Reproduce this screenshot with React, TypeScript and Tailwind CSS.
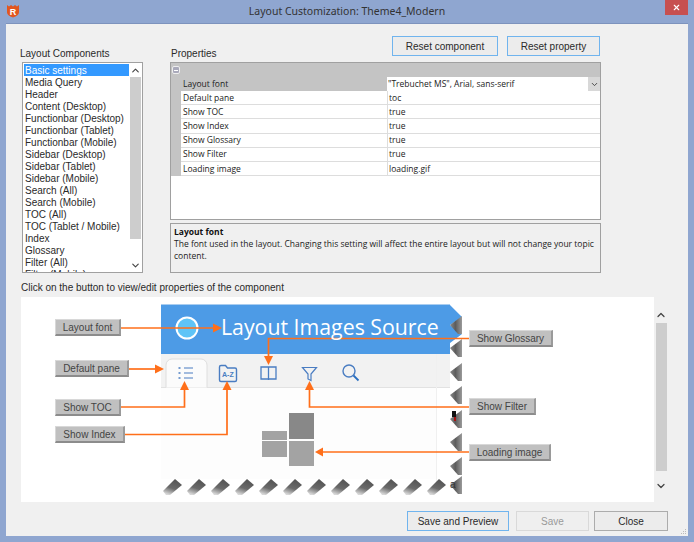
import { ChevronDown, ChevronUp, X } from "lucide-react";

const components = [
  "Media Query",
  "Header",
  "Content (Desktop)",
  "Functionbar (Desktop)",
  "Functionbar (Tablet)",
  "Functionbar (Mobile)",
  "Sidebar (Desktop)",
  "Sidebar (Tablet)",
  "Sidebar (Mobile)",
  "Search (All)",
  "Search (Mobile)",
  "TOC (All)",
  "TOC (Tablet / Mobile)",
  "Index",
  "Glossary",
  "Filter (All)",
  "Filter (Mobile)",
];

const rows = [
  ["Default pane", "toc"],
  ["Show TOC", "true"],
  ["Show Index", "true"],
  ["Show Glossary", "true"],
  ["Show Filter", "true"],
  ["Loading image", "loading.gif"],
];

const labels = [
  { text: "Layout font", className: "left-[34px] top-[22px] w-[66px]" },
  { text: "Default pane", className: "left-[34px] top-[63px] w-[74px]" },
  { text: "Show TOC", className: "left-[34px] top-[102px] w-[66px]" },
  { text: "Show Index", className: "left-[34px] top-[129px] w-[70px]" },
  { text: "Show Glossary", className: "left-[448px] top-[33px] w-[84px]" },
  { text: "Show Filter", className: "left-[448px] top-[101px] w-[67px]" },
  { text: "Loading image", className: "left-[448px] top-[147px] w-[82px]" },
];

const rightTeeth = [316, 339, 363, 386, 410, 433, 457, 476];
const bottomTeeth = [163, 187, 211, 235, 259, 283, 307, 331, 355, 379, 403, 427];

function Diagram() {
  return (
    <svg viewBox="21 297 633 205" className="absolute inset-0 h-full w-full">
      <defs>
        <linearGradient id="toothB" x1="0.7" y1="0.1" x2="0.35" y2="1">
          <stop offset="0" stopColor="#555" />
          <stop offset="0.55" stopColor="#6a6a6a" />
          <stop offset="1" stopColor="#d8d8d8" />
        </linearGradient>
        <linearGradient id="toothR" x1="0" y1="0" x2="1" y2="0">
          <stop offset="0" stopColor="#8a8a8a" />
          <stop offset="0.45" stopColor="#5c5c5c" />
          <stop offset="1" stopColor="#9a9a9a" />
        </linearGradient>
      </defs>

      {/* page preview */}
      <rect x="161" y="387" width="275" height="92" fill="#fdfdfd" />
      <rect x="161" y="354" width="289" height="33" fill="#f2f2f2" />
      <line x1="161" y1="387.500" x2="450" y2="387.500" stroke="#e2e2e2" />
      <line x1="436.500" y1="354" x2="436.500" y2="490" stroke="#f0f0f0" />
      <path d="M166 387.500V365a6 6 0 0 1 6-6h29a6 6 0 0 1 6 6v22.500" fill="#fbfbfb" stroke="#dedede" />
      <polygon points="161,304 449,304 462,317 450,325 462,334 450,343 450,354 161,354" fill="#4d9be6" />
      <line x1="161" y1="304.500" x2="449" y2="304.500" stroke="#a9cdf0" />
      <circle cx="187" cy="328" r="10.500" fill="#5fc4f7" stroke="#fff" strokeWidth="2" />

      {/* toolbar icons */}
      <g fill="none" stroke="#4a7dc2" strokeWidth="1.200">
        <path d="M184 368h9M184 373h9M184 378h9" />
        <path d="M178.500 368h2M178.500 373h2M178.500 378h2" strokeWidth="1.600" />
        <path d="M219.500 380v-13a1.500 1.500 0 0 1 1.500-1.500h4.500l2 2.500h7.500a1.500 1.500 0 0 1 1.500 1.500v10.500a1.500 1.500 0 0 1-1.500 1.500h-14a1.500 1.500 0 0 1-1.500-1.500z" strokeWidth="1.400" />
        <path d="M261 367h15v12h-15zM268.500 367v13" strokeWidth="1.300" />
        <path d="M302.500 367.500h14l-5.500 6.500v6.500l-3-1.500v-5z" />
        <circle cx="349" cy="371" r="6" strokeWidth="1.400" />
        <path d="M353.500 375.500l5 5" strokeWidth="1.800" stroke="#2a6fc0" />
      </g>
      <text x="222" y="377" fontSize="7" fontWeight="700" fill="#4a7dc2" fontFamily="Liberation Sans, sans-serif">
        A-Z
      </text>

      {/* loading image */}
      <rect x="262" y="431" width="25" height="9" fill="#a3a3a3" />
      <rect x="262" y="441" width="25" height="16" fill="#a3a3a3" />
      <rect x="289" y="413" width="25" height="26" fill="#888" />
      <rect x="289" y="441" width="25" height="25" fill="#a3a3a3" />

      {/* torn edge */}
      {bottomTeeth.map((x) => (
        <polygon
          key={x}
          points={`${x + 12},479 ${x},491 ${x + 3},495 ${x + 7},495 ${x + 19},485`}
          fill="url(#toothB)"
        />
      ))}
      {rightTeeth.map((y) => (
        <polygon key={y} points={`462,${y} 450,${y + 9} 458,${y + 18} 462,${y + 18}`} fill="url(#toothR)" />
      ))}
      <rect x="452" y="411" width="4" height="6" fill="#111" />
      <rect x="454" y="417" width="2" height="4" fill="#a11" />
      <text x="450" y="488" fontSize="10" fill="#333" fontFamily="Liberation Sans, sans-serif">
        a
      </text>

      {/* arrows */}
      <g fill="none" stroke="#ff6f1a" strokeWidth="1.700">
        <path d="M120 328H214" />
        <path d="M128 369H157" />
        <path d="M120 407H184.500V388" />
        <path d="M124 434.500H227V388" />
        <path d="M469 338.500H268.500V358" />
        <path d="M469 407H309.500V388" />
        <path d="M469 452H321" />
      </g>
      <g fill="#ff6f1a">
        <polygon points="222,328 213,323.500 213,332.500" />
        <polygon points="164,369 155,364.500 155,373.500" />
        <polygon points="184.500,381 180,390 189,390" />
        <polygon points="227,381 222.500,390 231.500,390" />
        <polygon points="268.500,365 264,356 273,356" />
        <polygon points="309.500,381 305,390 314,390" />
        <polygon points="315,452 323,447.500 323,456.500" />
      </g>
    </svg>
  );
}

export default function App() {
  return (
    <div className="flex h-[542px] w-[694px] flex-col overflow-hidden bg-[#8fa6d0] font-['Liberation_Sans',sans-serif] text-[10px] text-[#2a2a2a]">
      {/* title bar */}
      <div className="relative flex h-[23px] shrink-0 items-center justify-center font-['Noto_Sans',sans-serif] text-[10.5px] text-[#333]">
        <svg viewBox="0 0 14 14" className="absolute left-[6px] top-[4px] h-[14px] w-[14px]">
          <path d="M1 1l2 1.500L5 1l2 1.500L9 1l2 1.500L13 1v7c0 3-3 4.500-6 5.500C4 12.500 1 11 1 8z" fill="#e2561f" />
          <text x="7" y="10.500" textAnchor="middle" fontSize="9" fontWeight="700" fill="#fff" fontFamily="Liberation Sans, sans-serif">
            R
          </text>
        </svg>
        <span>Layout Customization: Theme4_Modern</span>
        <div className="absolute right-[6px] top-0 flex h-[15px] w-[23px] items-center justify-center bg-[#c75050]">
          <X size={9} strokeWidth={3} color="#fff" />
        </div>
      </div>

      {/* client area */}
      <div className="relative mx-[6px] mb-[6px] flex flex-1 flex-col border-t border-[#7d93bd] bg-[#f0f0f0] pl-[14px] pt-[12px]">
        <div className="flex h-[26px] shrink-0">
          <div className="w-[150px] self-end pb-[2px] leading-[13px]">Layout Components</div>
          <div className="w-[222px] self-end pb-[2px] pl-[1px] leading-[13px]">Properties</div>
          <div className="flex h-[20px] gap-[9px]">
            <div className="flex w-[106px] items-center justify-center border border-[#70b4ee] bg-[#ececec]">Reset component</div>
            <div className="flex w-[93px] items-center justify-center border border-[#70b4ee] bg-[#ececec]">Reset property</div>
          </div>
        </div>

        <div className="flex h-[211px] shrink-0">
          {/* component list */}
          <div className="ml-[2px] flex h-full w-[121px] border border-[#a0a0a0] bg-white">
            <div className="w-[106px] overflow-hidden pl-[1px] pt-[1px] leading-[14px]">
              <div className="h-[12px] bg-[#3399ff] pl-[1px] text-white">Basic settings</div>
              {components.map((name) => (
                <div key={name} className="h-[12px] whitespace-nowrap pl-[1px]">
                  {name}
                </div>
              ))}
            </div>
            <div className="flex w-[13px] flex-col items-center">
              <div className="flex h-[14px] items-center">
                <ChevronUp size={11} strokeWidth={2.500} color="#444" />
              </div>
              <div className="h-[162px] w-[11px] bg-[#cdcdcd]" />
              <div className="mt-auto flex h-[14px] items-center">
                <ChevronDown size={11} strokeWidth={2.500} color="#444" />
              </div>
            </div>
          </div>

          {/* properties */}
          <div className="ml-[27px] flex w-[431px] flex-col">
            <div className="h-[158px] border border-[#a0a0a0] bg-white font-['Open_Sans',sans-serif] text-[8.5px] text-[#222]">
              <div className="flex h-[14px] items-center bg-[#c4c4c4] pl-[1px]">
                <div className="flex h-[8px] w-[8px] items-center justify-center rounded-[2px] border border-[#eee] bg-[#aab]">
                  <div className="h-[1px] w-[4px] bg-white" />
                </div>
              </div>
              <div className="flex h-[14px] items-center bg-[#c4c4c4]">
                <div className="w-[216px] pl-[12px]">Layout font</div>
                <div className="flex h-full flex-1 items-center justify-between bg-white pl-[1px]">
                  <span>"Trebuchet MS", Arial, sans-serif</span>
                  <div className="flex h-full w-[12px] items-center justify-center bg-[#d8d8d8]">
                    <ChevronDown size={9} strokeWidth={2.500} color="#444" />
                  </div>
                </div>
              </div>
              {rows.map(([name, value]) => (
                <div key={name} className="flex h-[14.2px] items-center bg-[#c4c4c4] pl-[10px]">
                  <div className="flex h-full w-[206px] items-center border-b border-[#ddd] bg-white pl-[2px] pt-[1px]">{name}</div>
                  <div className="flex h-full flex-1 items-center border-b border-l border-[#ddd] bg-white pl-[1px] pt-[1px]">{value}</div>
                </div>
              ))}
            </div>
            <div className="mt-[3px] h-[50px] border border-[#a0a0a0] bg-[#f0f0f0] px-[3px] pt-[2px] font-['Open_Sans',sans-serif] text-[8.5px] leading-[12px] text-[#222]">
              <div className="font-bold text-[#111]">Layout font</div>
              <div>
                The font used in the layout. Changing this setting will affect the entire layout but will not change your topic content.
              </div>
            </div>
          </div>
        </div>

        <div className="mt-[8px] h-[14px] shrink-0 pl-[1px] leading-[14px]">Click on the button to view/edit properties of the component</div>

        <div className="mt-[2px] flex h-[205px] shrink-0 pl-[1px]">
          <div className="relative h-full w-[633px] overflow-hidden bg-white">
            <Diagram />
            <span className="absolute left-[200px] top-[15px] whitespace-nowrap font-['Open_Sans',sans-serif] text-[21.3px] leading-[30px] text-white">
              Layout Images Source
            </span>
            {labels.map((label) => (
              <div
                key={label.text}
                className={`absolute flex h-[17px] items-center justify-center border-b-2 border-l border-r-2 border-t border-b-[#8c8c8c] border-l-[#d8d8d8] border-r-[#9a9a9a] border-t-[#d8d8d8] bg-[#c0c0c0] pt-[1px] text-[10px] text-[#444] ${label.className}`}
              >
                {label.text}
              </div>
            ))}
          </div>
          <div className="ml-[1px] flex w-[12px] flex-col items-center">
            <div className="flex h-[26px] items-end pb-[2px]">
              <ChevronUp size={12} strokeWidth={2.500} color="#444" />
            </div>
            <div className="h-[148px] w-[11px] bg-[#cdcdcd]" />
            <div className="mt-[6px] flex h-[18px] items-center">
              <ChevronDown size={12} strokeWidth={2.500} color="#444" />
            </div>
          </div>
        </div>

        <div className="mt-[9px] flex h-[20px] shrink-0 justify-end gap-[5px] pr-[20px]">
          <div className="mr-[2px] flex w-[102px] items-center justify-center border border-[#70b4ee] bg-[#ececec]">Save and Preview</div>
          <div className="flex w-[73px] items-center justify-center border border-[#d9d9d9] bg-[#efefef] text-[#9a9a9a]">Save</div>
          <div className="flex w-[74px] items-center justify-center border border-[#acacac] bg-[#ececec]">Close</div>
        </div>

        {/* resize grip */}
        <svg viewBox="0 0 7 7" className="absolute bottom-[1px] right-[1px] h-[7px] w-[7px]" fill="#bbb">
          <rect x="5" y="1" width="1" height="1" />
          <rect x="3" y="3" width="1" height="1" />
          <rect x="5" y="3" width="1" height="1" />
          <rect x="1" y="5" width="1" height="1" />
          <rect x="3" y="5" width="1" height="1" />
          <rect x="5" y="5" width="1" height="1" />
        </svg>
      </div>
    </div>
  );
}
